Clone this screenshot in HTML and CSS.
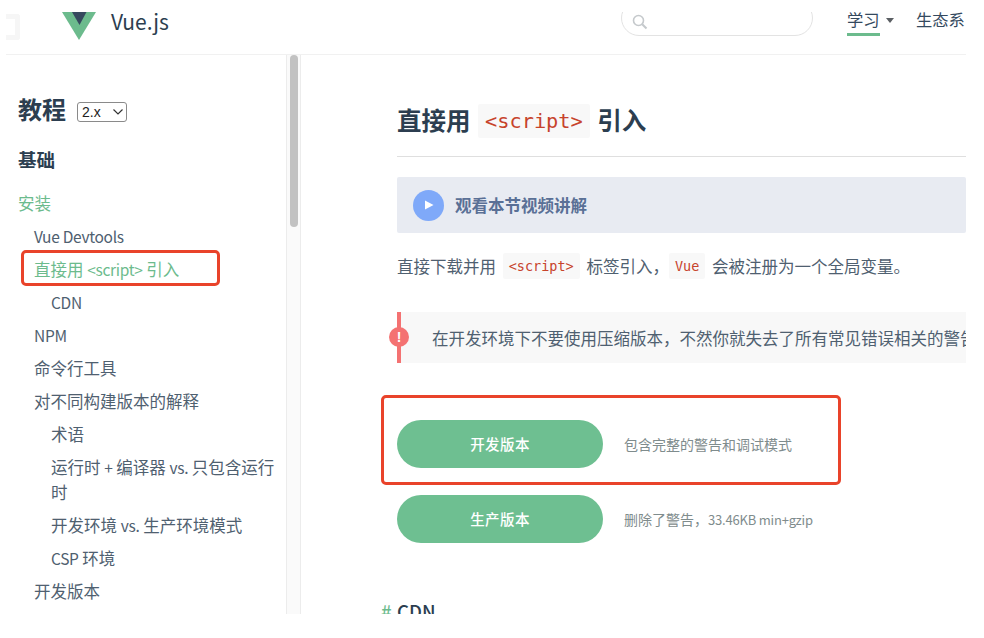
FILE: index.html
```html
<!DOCTYPE html>
<html lang="zh-CN">
<head>
<meta charset="utf-8">
<title>直接用 script 引入 - Vue.js</title>
<link rel="stylesheet" href="styles.css">
</head>
<body>
<div class="frame">
  <header class="topbar">
    <div class="menu-mark"></div>
    <svg class="logo" viewBox="0 0 34 28" width="34" height="28" aria-hidden="true">
      <polygon points="0,0 34,0 17,28" fill="#6cbb8d"/>
      <polygon points="10,0 24.5,0 17.5,13" fill="#35495e"/>
    </svg>
    <span class="brand">Vue.js</span>
    <div class="search">
      <svg class="search-icon" viewBox="0 0 16 16" width="16" height="16" aria-hidden="true">
        <circle cx="6.5" cy="6.5" r="5" fill="none" stroke="#c5c9cc" stroke-width="1.6"/>
        <line x1="10.2" y1="10.2" x2="14.5" y2="14.5" stroke="#c5c9cc" stroke-width="2"/>
      </svg>
    </div>
    <nav class="topnav">
      <a class="topnav-item is-current">学习<i class="caret"></i></a>
      <a class="topnav-item">生态系</a>
    </nav>
  </header>
  <div class="layout">
    <aside class="sidebar">
      <h2 class="side-title">教程
        <span class="version-wrap">
          <select class="version"><option>2.x</option></select>
          <svg class="chevron" viewBox="0 0 10 6" width="10" height="6" aria-hidden="true"><polyline points="0.5,0.5 5,5 9.5,0.5" fill="none" stroke="#333" stroke-width="1.2"/></svg>
        </span>
      </h2>
      <h3 class="side-group">基础</h3>
      <ul class="side-list">
        <li class="side-head">安装</li>
        <li class="side-item"><span class="latin">Vue Devtools</span></li>
        <li class="side-item is-active">直接用 <span class="latin">&lt;script&gt;</span> 引入</li>
        <li class="side-item sub"><span class="latin">CDN</span></li>
        <li class="side-item"><span class="latin">NPM</span></li>
        <li class="side-item">命令行工具</li>
        <li class="side-item">对不同构建版本的解释</li>
        <li class="side-item sub">术语</li>
        <li class="side-item sub">运行时 <span class="latin">+</span> 编译器 <span class="latin">vs.</span> 只包含运行时</li>
        <li class="side-item sub">开发环境 <span class="latin">vs.</span> 生产环境模式</li>
        <li class="side-item sub"><span class="latin">CSP</span> 环境</li>
        <li class="side-item">开发版本</li>
      </ul>
    </aside>
    <div class="scrollbar"><div class="thumb"></div></div>
    <main class="content">
      <h1 class="page-title">直接用 <code class="code-lg">&lt;script&gt;</code> 引入</h1>
      <div class="video">
        <span class="play"><svg viewBox="0 0 12 12" width="12" height="12" aria-hidden="true"><polygon points="2,1.5 10.5,6 2,10.5" fill="#fff"/></svg></span>
        <span class="video-text">观看本节视频讲解</span>
      </div>
      <p class="para">直接下载并用 <code class="code">&lt;script&gt;</code> 标签引入，<code class="code code-vue">Vue</code> 会被注册为一个全局变量。</p>
      <div class="warning">
        <span class="warn-dot">!</span>
        <span class="warn-text">在开发环境下不要使用压缩版本，不然你就失去了所有常见错误相关的警告！</span>
      </div>
      <div class="download">
        <a class="btn">开发版本</a>
        <span class="btn-note">包含完整的警告和调试模式</span>
      </div>
      <div class="download">
        <a class="btn">生产版本</a>
        <span class="btn-note">删除了警告，<span class="latin-note">33.46KB min+gzip</span></span>
      </div>
      <h2 class="section"><span class="hash">#</span>CDN</h2>
    </main>
    <div class="mark mark-side"></div>
    <div class="mark mark-btn"></div>
  </div>
</div>
</body>
</html>
```
FILE: styles.css
```css
* { box-sizing: border-box; }
html, body { margin: 0; padding: 0; background: #fff; }
body { font-family: "Noto Sans CJK SC", "Noto Sans", sans-serif; color: #34495e; }

.frame {
  width: 960px;
  height: 602px;
  margin: 12px 0 0 6px;
  overflow: hidden;
  display: flex;
  flex-direction: column;
}
.latin { font-size: 15.5px; letter-spacing: -0.3px; }
.latin-note { font-size: 13px; letter-spacing: -0.2px; }

/* top bar */
.topbar {
  height: 43px;
  flex: none;
  display: flex;
  align-items: flex-start;
  border-bottom: 1px solid #f1f1f1;
  overflow: hidden;
}
.menu-mark {
  width: 14px;
  height: 26px;
  flex: none;
  margin-top: 2px;
  border: 5px solid #f6f6f6;
  border-left: 0;
  border-radius: 0 3px 3px 0;
}
.logo { margin-left: 42px; flex: none; }
.brand { margin: -3px 0 0 15px; width: 60px; flex: none; font-size: 21px; line-height: 24px; color: #2c3e50; }
.search {
  width: 192px;
  height: 36px;
  margin: -12px 0 0 450px;
  border: 1px solid #e3e3e3;
  border-radius: 18px;
  background: #fff;
  flex: none;
}
.search-icon { margin: 13px 0 0 10px; display: block; }
.topnav { display: flex; gap: 36px; margin-left: 34px; flex: none; }
.topnav-item { font-size: 16.3px; line-height: 15px; color: #34495e; display: block; white-space: nowrap; }
.is-current { height: 23.5px; border-bottom: 3px solid #6cbb8d; position: relative; width: 33px; }
.caret {
  position: absolute;
  left: 39px;
  top: 6px;
  border: 4.5px solid transparent;
  border-top: 5px solid #5b5f63;
  border-bottom: 0;
}

/* columns */
.layout { flex: 1; min-height: 0; display: flex; position: relative; }
.sidebar { width: 280px; flex: none; padding: 38px 0 0 12px; }
.side-title { margin: 0; font-size: 24px; line-height: 32px; font-weight: 700; color: #2c3e50; display: flex; align-items: center; gap: 11px; }
.version-wrap { position: relative; display: block; width: 50px; height: 20px; margin-top: 5px; }
.version {
  display: block;
  width: 50px;
  height: 20px;
  padding: 0 0 0 4px;
  font: 14px/18px "Liberation Sans", sans-serif;
  color: #222;
  background: #fff;
  border: 1px solid #8a8a8a;
  border-radius: 3px;
  appearance: none;
}
.chevron { position: absolute; right: 4px; top: 7px; }
.side-group { margin: 20px 0 0; font-size: 18.5px; line-height: 28px; font-weight: 700; color: #2c3e50; }
.side-list { list-style: none; margin: 18px 0 0; padding: 0; font-size: 16.5px; line-height: 25px; }
.side-head { color: #6cbb8d; padding-bottom: 4px; }
.side-item { padding: 4px 0 4px 16px; color: #4f6070; }
.side-item.sub { padding-left: 33px; padding-right: 8px; }
.side-item.is-active { color: #6cbb8d; }

.scrollbar {
  width: 15px;
  flex: none;
  background: #fafafa;
  border-left: 1px solid #ececec;
  border-right: 1px solid #ececec;
  padding: 0 2px 0 3px;
}
.thumb { height: 172px; width: 8px; background: #c2c2c2; border-radius: 4px; }

/* article */
.content { flex: 1; min-width: 0; padding: 44px 0 0 96px; overflow: hidden; }
.page-title {
  margin: 0;
  height: 58px;
  border-bottom: 1px solid #dfdfdf;
  font-size: 24.5px;
  line-height: 41px;
  font-weight: 700;
  color: #2c3e50;
  display: flex;
  align-items: flex-start;
  white-space: pre;
}
code { font-family: "DejaVu Sans Mono", "Liberation Mono", monospace; color: #c7432c; background: #f8f8f8; border-radius: 2px; }
.code-lg { font-size: 20.3px; font-weight: 400; line-height: 34px; height: 34px; padding: 0 7px; margin: 5px 2px 0; }
.video {
  margin-top: 20px;
  height: 56px;
  background: #e8ebf2;
  border-radius: 2px;
  display: flex;
  align-items: center;
  padding-left: 16px;
  gap: 11px;
}
.play { width: 31px; height: 31px; border-radius: 50%; background: #7fa9f9; display: flex; align-items: center; justify-content: center; }
.video-text { font-size: 16.5px; font-weight: 700; color: #5a7096; }
.para { margin: 20px 0 0; font-size: 16.5px; line-height: 26px; color: #4f6070; white-space: nowrap; }
.code { font-size: 13.5px; display: inline-block; line-height: 26px; padding: 0 6px; margin: 0 3px; vertical-align: top; }
.code-vue { margin-left: 0; }
.warning {
  margin-top: 33px;
  height: 51px;
  background: #f8f8f8;
  border-left: 4px solid #f47272;
  display: flex;
  align-items: center;
  padding-left: 31px;
  position: relative;
  font-size: 16.5px;
  color: #4f6070;
  white-space: nowrap;
}
.warn-dot {
  position: absolute;
  left: -12px;
  top: 15px;
  width: 20px;
  height: 20px;
  border-radius: 50%;
  background: #f47272;
  color: #fff;
  font: 700 14px/20px "Liberation Sans", sans-serif;
  text-align: center;
}
.download { display: flex; align-items: center; margin-top: 27px; gap: 21px; }
.warning + .download { margin-top: 57px; }
.btn {
  width: 206px;
  height: 48px;
  border-radius: 24px;
  background: #6ebf91;
  color: #fff;
  font-size: 14.5px;
  font-weight: 500;
  line-height: 48px;
  text-align: center;
  letter-spacing: 0.4px;
}
.btn-note { font-size: 14px; color: #7f8c8d; }
.section { position: relative; margin: 56px 0 0; font-size: 18.5px; line-height: 24px; font-weight: 500; color: #2c3e50; }
.hash { position: absolute; left: -16px; color: #6cbb8d; }

/* annotation boxes over the screenshot */
.mark { position: absolute; border: 3px solid #e9432a; border-radius: 5px; pointer-events: none; }
.mark-side { left: 15px; top: 195px; width: 199px; height: 36px; }
.mark-btn { left: 375px; top: 340px; width: 460px; height: 90px; }
```
